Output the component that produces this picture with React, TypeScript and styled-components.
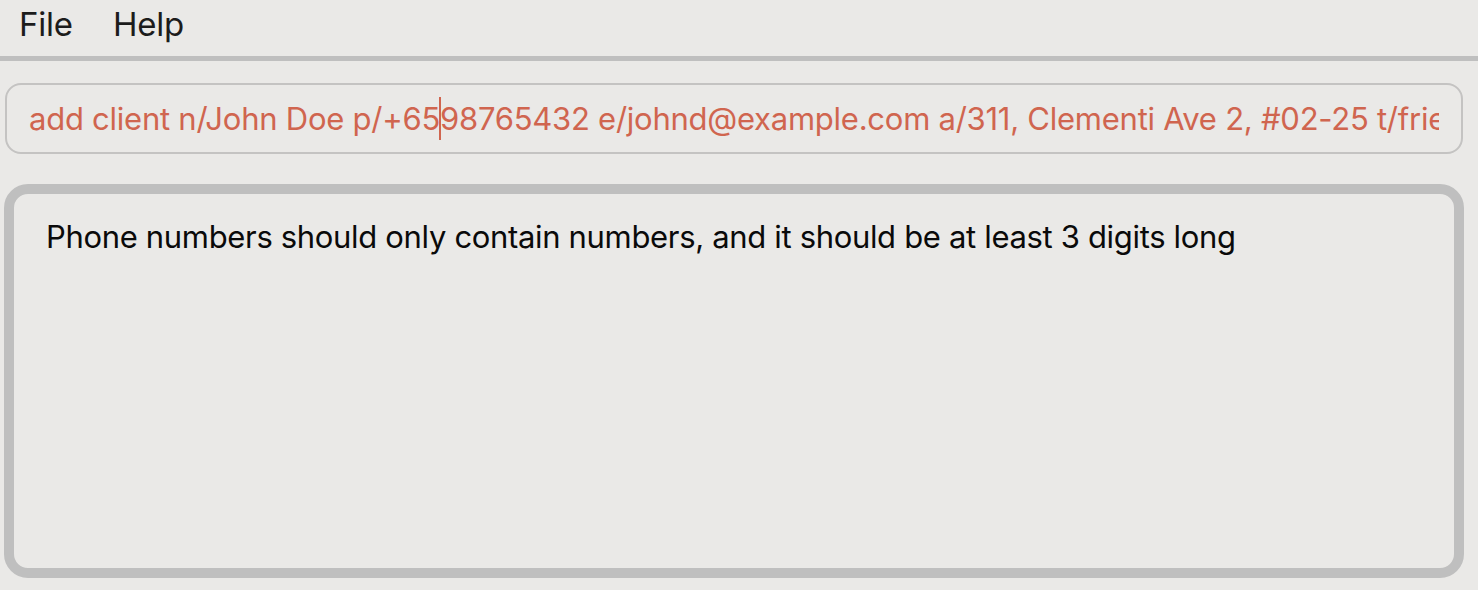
import React from "react";
import styled, { createGlobalStyle } from "styled-components";

const Global = createGlobalStyle`
  html, body { margin: 0; padding: 0; background: #eae9e7; }
  body { font-family: Inter, "Noto Sans", sans-serif; }
`;

const Page = styled.div`
  width: 1478px;
  height: 590px;
  background: #eae9e7;
  display: flex;
  flex-direction: column;
  overflow: hidden;
`;

const MenuBar = styled.div`
  height: 61px;
  display: flex;
  align-items: center;
  gap: 40px;
  padding: 0 0 8px 19px;
  box-sizing: border-box;
  border-bottom: 5px solid #bfbfbf;
`;

const MenuItem = styled.span`
  font-size: 33px;
  color: #1c1c1c;
  letter-spacing: -0.2px;
`;

const CommandBox = styled.div`
  margin: 22px 15px 0 5px;
  height: 71px;
  box-sizing: border-box;
  border: 2px solid #c4c3c2;
  border-radius: 16px;
  display: flex;
  align-items: center;
  padding: 0 22px 0 22px;
  overflow: hidden;
`;

const CommandText = styled.div`
  white-space: nowrap;
  overflow: hidden;
  font-size: 31px;
  color: #d0654f;
  letter-spacing: -0.25px;
  width: 100%;
`;

const Caret = styled.span`
  display: inline-block;
  width: 2px;
  height: 43px;
  margin: 0 -1px 0 -1px;
  background: #d0654f;
  vertical-align: -10px;
`;

const ResultBox = styled.div`
  margin: 30px 14px 12px 4px;
  flex: 1;
  border: 10px solid #bfbfbf;
  border-radius: 24px;
  padding: 24px 32px;
`;

const ResultText = styled.div`
  font-size: 31px;
  color: #0a0a0a;
  letter-spacing: -0.33px;
`;

export default function App() {
  return (
    <Page>
      <Global />
      <MenuBar>
        <MenuItem>File</MenuItem>
        <MenuItem>Help</MenuItem>
      </MenuBar>
      <CommandBox>
        <CommandText>
          add client n/John Doe p/+65<Caret />98765432 e/johnd@example.com a/311, Clementi Ave 2, #02-25 t/friends t/owesMoney
        </CommandText>
      </CommandBox>
      <ResultBox>
        <ResultText>
          Phone numbers should only contain numbers, and it should be at least 3 digits long
        </ResultText>
      </ResultBox>
    </Page>
  );
}
